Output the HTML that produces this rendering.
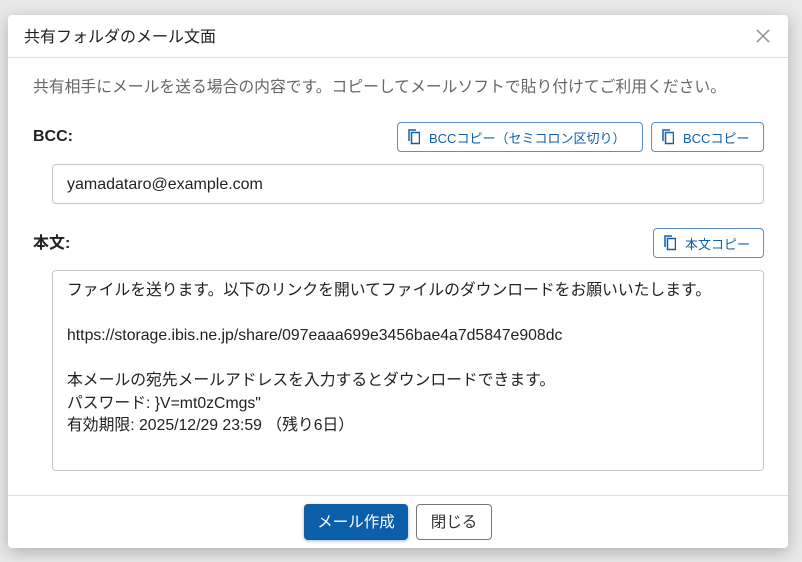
<!DOCTYPE html>
<html><head><meta charset="utf-8"><style>
*{box-sizing:border-box;margin:0;padding:0}
body{width:802px;height:562px;background:#e9e9e9;font-family:"Liberation Sans","Noto Sans CJK JP",sans-serif;position:relative;overflow:hidden}
.dlg{position:absolute;left:8px;top:15px;width:780px;height:533px;background:#fff;border-radius:4px;box-shadow:0 4px 16px rgba(0,0,0,.25)}
.a{position:absolute;white-space:nowrap}
.btn{position:absolute;border:1px solid #5b8fc0;border-radius:4px;color:#1060a8;font-size:13px;display:flex;align-items:center;padding-left:10px;background:#fff;white-space:nowrap}
.btn svg{margin-right:9px}
.box{position:absolute;border:1px solid #c8c8c8;border-radius:4px;font-size:16px;color:#222}
</style></head><body>
<div class="dlg">
<div class="a" style="left:16px;top:8px;font-size:16px;color:#222">共有フォルダのメール文面</div>
<svg class="a" style="left:747px;top:13px" width="16" height="16"><path d="M2 2L14 14M14 2L2 14" stroke="#999" stroke-width="1.6"/></svg>
<div class="a" style="left:0;top:42px;width:780px;border-top:1px solid #ddd"></div>
<div class="a" style="left:25px;top:59px;font-size:15.8px;color:#666">共有相手にメールを送る場合の内容です。コピーしてメールソフトで貼り付けてご利用ください。</div>
<div class="a" style="left:25px;top:113px;font-size:16px;font-weight:bold;color:#222">BCC:</div>
<div class="btn" style="left:389px;top:107px;width:246px;height:30px"><svg width="12" height="16"><rect x="3.5" y="3.5" width="8" height="11" fill="none" stroke="#1060a8" stroke-width="1.5"/><path d="M1 12V1h7" fill="none" stroke="#1060a8" stroke-width="1.5"/></svg>BCCコピー（セミコロン区切り）</div>
<div class="btn" style="left:643px;top:107px;width:113px;height:30px"><svg width="12" height="16"><rect x="3.5" y="3.5" width="8" height="11" fill="none" stroke="#1060a8" stroke-width="1.5"/><path d="M1 12V1h7" fill="none" stroke="#1060a8" stroke-width="1.5"/></svg>BCCコピー</div>
<div class="box" style="left:44px;top:149px;width:712px;height:40px;padding:11px 14px 0">yamadataro@example.com</div>
<div class="a" style="left:25px;top:214px;font-size:16px;font-weight:bold;color:#222">本文:</div>
<div class="btn" style="left:645px;top:213px;width:111px;height:30px"><svg width="12" height="16"><rect x="3.5" y="3.5" width="8" height="11" fill="none" stroke="#1060a8" stroke-width="1.5"/><path d="M1 12V1h7" fill="none" stroke="#1060a8" stroke-width="1.5"/></svg>本文コピー</div>
<div class="box" style="left:44px;top:255px;width:712px;height:201px;padding:9px 14px;line-height:22.5px;white-space:pre;font-size:15.8px">ファイルを送ります。以下のリンクを開いてファイルのダウンロードをお願いいたします。

https://storage.ibis.ne.jp/share/097eaaa699e3456bae4a7d5847e908dc

本メールの宛先メールアドレスを入力するとダウンロードできます。
パスワード: }V=mt0zCmgs"
有効期限: 2025/12/29 23:59 （残り6日）</div>
<div class="a" style="left:0;top:480px;width:780px;border-top:1px solid #ddd"></div>
<div class="a" style="left:296px;top:489px;width:104px;height:36px;background:#0a5fa8;border-radius:4px;color:#fff;font-size:15.5px;text-align:center;line-height:38px;box-shadow:0 1px 3px rgba(0,0,0,.3)">メール作成</div>
<div class="a" style="left:408px;top:489px;width:76px;height:36px;border:1px solid #777;border-radius:4px;color:#333;font-size:15.5px;text-align:center;line-height:36px">閉じる</div>
</div>
</body></html>
